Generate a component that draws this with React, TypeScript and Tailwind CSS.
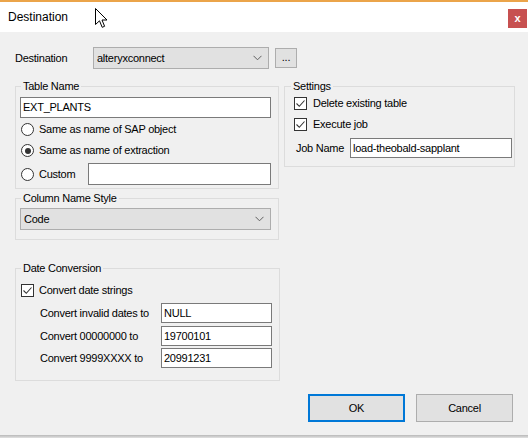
import React from "react";

const Check = () => (
  <span className="w-[13px] h-[13px] border border-[#333333] bg-white flex items-center justify-center shrink-0">
    <svg width="11" height="11" viewBox="0 0 11 11">
      <path d="M1.5 5.5 L4.3 8.3 L9.5 2.5" fill="none" stroke="#333333" strokeWidth="1.1" />
    </svg>
  </span>
);

const Radio = ({ checked }: { checked?: boolean }) => (
  <span className="ml-[1px] w-[13px] h-[13px] rounded-full border border-[#333333] bg-white flex items-center justify-center shrink-0">
    {checked && <span className="w-[6px] h-[6px] rounded-full bg-[#333333]" />}
  </span>
);

const Chevron = () => (
  <svg width="9" height="6" viewBox="0 0 9 6">
    <path d="M0.5 0.8 L4.5 4.8 L8.5 0.8" fill="none" stroke="#606060" strokeWidth="1" />
  </svg>
);

const Group = ({
  label,
  className,
  legendClass,
  children,
}: {
  label: string;
  className: string;
  legendClass?: string;
  children: React.ReactNode;
}) => (
  <fieldset className={`border border-[#dcdcdc] ${className}`}>
    <legend className={`px-[2px] leading-[12px] ${legendClass ?? "ml-[1px]"}`}>{label}</legend>
    {children}
  </fieldset>
);

export default function App() {
  return (
    <div className="relative w-[528px] h-[438px] overflow-hidden bg-[#f0f0f0] flex flex-col font-['Liberation_Sans',Arial,sans-serif] text-[11px] tracking-[-0.25px] text-black">
      <div className="h-[2px] bg-[#eba44a] shrink-0" />

      {/* title bar */}
      <div className="h-[30px] bg-white flex items-center justify-between shrink-0">
        <span className="pl-[8px] text-[12px] tracking-normal">Destination</span>
        <span className="mr-[1px] mt-[7px] self-start w-[19px] h-[19px] bg-[#c75050] text-white font-bold text-[11px] leading-none flex items-center justify-center">
          x
        </span>
      </div>

      {/* body */}
      <div className="flex-1 flex flex-col pl-[15px] pt-[15px]">
        <div className="flex items-center h-[22px]">
          <span className="w-[78px]">Destination</span>
          <div className="w-[176px] h-[22px] bg-[#e1e1e1] border border-[#adadad] flex items-center justify-between pl-[3px] pr-[6px]">
            <span>alteryxconnect</span>
            <Chevron />
          </div>
          <div className="ml-[6px] w-[22px] h-[20px] bg-[#e1e1e1] border border-[#adadad] flex items-center justify-center leading-none pb-[2px]">
            ...
          </div>
        </div>

        <div className="flex items-start gap-[5px] mt-[11px]">
          {/* left column */}
          <div className="w-[264px] flex flex-col">
            <Group label="Table Name" className="pl-[4px] pr-[7px] pt-[5px] pb-[3px]">
              <div className="h-[21px] bg-white border border-[#7a7a7a] flex items-center pl-[2px]">EXT_PLANTS</div>
              <div className="mt-[1px] h-[21px] flex items-center">
                <Radio />
                <span className="ml-[5px]">Same as name of SAP object</span>
              </div>
              <div className="h-[21px] flex items-center">
                <Radio checked />
                <span className="ml-[5px]">Same as name of extraction</span>
              </div>
              <div className="mt-[2px] h-[22px] flex items-center">
                <Radio />
                <span className="ml-[5px] w-[49px]">Custom</span>
                <div className="w-[183px] h-[22px] bg-white border border-[#7a7a7a]" />
              </div>
            </Group>

            <Group label="Column Name Style" className="mt-[3px] pl-[4px] pr-[7px] pt-[4px] pb-[9px]">
              <div className="h-[22px] bg-[#e1e1e1] border border-[#adadad] flex items-center justify-between pl-[3px] pr-[6px]">
                <span>Code</span>
                <Chevron />
              </div>
            </Group>

            <Group label="Date Conversion" className="mt-[22px] pl-[4px] pr-[7px] pt-[8px] pb-[12px]">
              <div className="h-[16px] flex items-center pl-[1px]">
                <Check />
                <span className="ml-[5px]">Convert date strings</span>
              </div>
              <div className="mt-[5px] h-[20px] flex items-center pl-[20px]">
                <span className="w-[121px]">Convert invalid dates to</span>
                <div className="w-[111px] h-[20px] bg-white border border-[#7a7a7a] flex items-center pl-[2px]">NULL</div>
              </div>
              <div className="mt-[3px] h-[20px] flex items-center pl-[20px]">
                <span className="w-[121px]">Convert 00000000 to</span>
                <div className="w-[111px] h-[20px] bg-white border border-[#7a7a7a] flex items-center pl-[2px]">19700101</div>
              </div>
              <div className="mt-[2px] h-[20px] flex items-center pl-[20px]">
                <span className="w-[121px]">Convert 9999XXXX to</span>
                <div className="w-[111px] h-[20px] bg-white border border-[#7a7a7a] flex items-center pl-[2px]">20991231</div>
              </div>
            </Group>
          </div>

          {/* right column */}
          <Group
            label="Settings"
            legendClass="ml-[-3px]"
            className="w-[231px] pl-[9px] pr-[2px] pt-[3px] pb-[8px]"
          >
            <div className="h-[16px] flex items-center">
              <Check />
              <span className="ml-[6px]">Delete existing table</span>
            </div>
            <div className="mt-[5px] h-[16px] flex items-center">
              <Check />
              <span className="ml-[6px]">Execute job</span>
            </div>
            <div className="mt-[6px] h-[20px] flex items-center pl-[2px]">
              <span className="w-[54px]">Job Name</span>
              <div className="w-[162px] h-[20px] bg-white border border-[#7a7a7a] flex items-center pl-[2px]">
                load-theobald-sapplant
              </div>
            </div>
          </Group>
        </div>

        <div className="mt-[13px] flex justify-end gap-[11px] pr-[15px]">
          <button className="w-[97px] h-[28px] bg-[#e1e1e1] border-2 border-[#0078d7]">OK</button>
          <button className="w-[97px] h-[28px] bg-[#e1e1e1] border border-[#adadad]">Cancel</button>
        </div>
      </div>

      <div className="h-[3px] shrink-0 bg-gradient-to-b from-[#b8b8b8] to-[#e2e2e2]" />

      {/* mouse pointer */}
      <svg className="absolute left-[95px] top-[8px]" width="14" height="21" viewBox="0 0 14 21">
        <path
          d="M0.5 0.5 L0.5 16.5 L4.5 12.8 L7.2 19.3 L9.6 18.3 L7 12 L12 12 Z"
          fill="white"
          stroke="black"
          strokeWidth="1"
          strokeLinejoin="miter"
        />
      </svg>
    </div>
  );
}
